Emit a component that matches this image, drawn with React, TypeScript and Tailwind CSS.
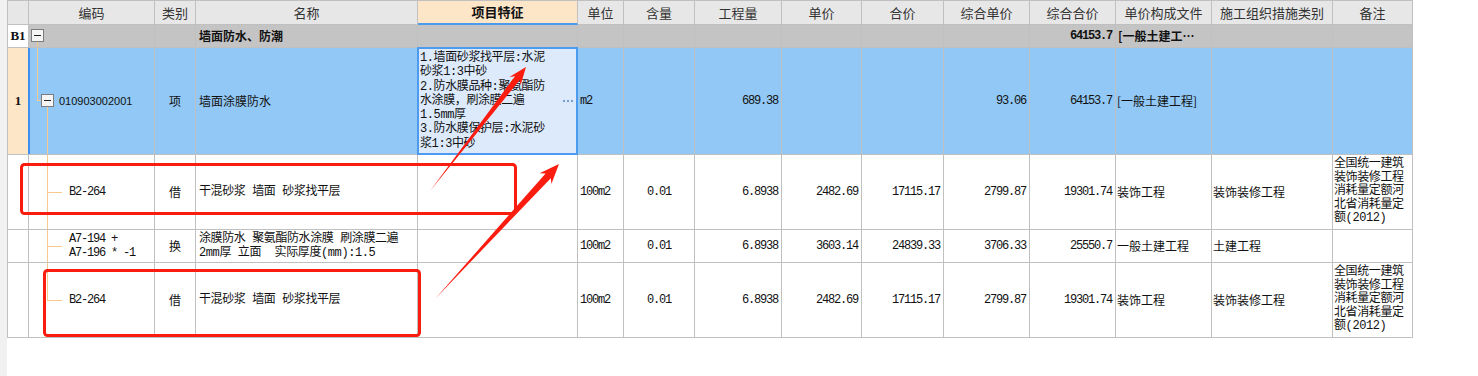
import React from "react";

const GRID =
  "grid grid-cols-[21px_126px_41px_222px_160px_46px_71px_87px_80px_82px_86px_86px_96px_121px_80px]";
const C = "relative border-r border-b border-[#c0c0c0] flex items-center min-w-0";
const CJK = "font-['Noto_Sans_CJK_SC',sans-serif] text-[12px] text-[#111]";
const NUM =
  "font-['Liberation_Mono','Noto_Sans_CJK_SC',monospace] text-[12px] tracking-[-1.2px] text-[#111]";
const MIX =
  "font-['Liberation_Mono','Noto_Sans_CJK_SC',monospace] text-[12px] tracking-[-0.4px] text-[#111]";
const TREE = "absolute bg-[#f6ca8e]";

function Minus({ cls }: { cls: string }) {
  return (
    <div
      className={`absolute w-[13px] h-[13px] border border-[#7d7d7d] bg-[#f5f5f5] flex items-center justify-center ${cls}`}
    >
      <div className="w-[7px] h-px bg-[#222]" />
    </div>
  );
}

function arrow(tx: number, ty: number, px: number, py: number, h: number, hw: number, w: number) {
  const dx = px - tx;
  const dy = py - ty;
  const L = Math.hypot(dx, dy);
  const ux = dx / L;
  const uy = dy / L;
  const nx = -uy;
  const ny = ux;
  const bx = px - ux * h;
  const by = py - uy * h;
  const bbx = px - ux * (h + 4);
  const bby = py - uy * (h + 4);
  const pts = [
    [tx, ty],
    [bx + nx * w, by + ny * w],
    [bbx + nx * hw, bby + ny * hw],
    [px, py],
    [bbx - nx * hw, bby - ny * hw],
    [bx - nx * w, by - ny * w],
  ];
  return pts.map((p) => `${p[0].toFixed(1)},${p[1].toFixed(1)}`).join(" ");
}

const headers = [
  "",
  "编码",
  "类别",
  "名称",
  "项目特征",
  "单位",
  "含量",
  "工程量",
  "单价",
  "合价",
  "综合单价",
  "综合合价",
  "单价构成文件",
  "施工组织措施类别",
  "备注",
];

const remark = ["全国统一建筑", "装饰装修工程", "消耗量定额河", "北省消耗量定", "额(2012)"];

type Sub = {
  code: string[];
  kind: string;
  name: string[];
  price: string;
  total: string;
  cprice: string;
  ctotal: string;
  file: string;
  cat: string;
  remark: boolean;
  h: string;
  last?: boolean;
};

const subs: Sub[] = [
  {
    code: ["B2-264"],
    kind: "借",
    name: ["干混砂浆 墙面 砂浆找平层"],
    price: "2482.69",
    total: "17115.17",
    cprice: "2799.87",
    ctotal: "19301.74",
    file: "装饰工程",
    cat: "装饰装修工程",
    remark: true,
    h: "h-[75px]",
  },
  {
    code: ["A7-194 +", "A7-196 * -1"],
    kind: "换",
    name: ["涂膜防水 聚氨酯防水涂膜 刷涂膜二遍", "2mm厚 立面  实际厚度(mm):1.5"],
    price: "3603.14",
    total: "24839.33",
    cprice: "3706.33",
    ctotal: "25550.7",
    file: "一般土建工程",
    cat: "土建工程",
    remark: false,
    h: "h-[33px]",
  },
  {
    code: ["B2-264"],
    kind: "借",
    name: ["干混砂浆 墙面 砂浆找平层"],
    price: "2482.69",
    total: "17115.17",
    cprice: "2799.87",
    ctotal: "19301.74",
    file: "装饰工程",
    cat: "装饰装修工程",
    remark: true,
    h: "h-[75px]",
    last: true,
  },
];

const features = [
  "1.墙面砂浆找平层:水泥",
  "砂浆1:3中砂",
  "2.防水膜品种:聚氨酯防",
  "水涂膜，刷涂膜二遍",
  "1.5mm厚",
  "3.防水膜保护层:水泥砂",
  "浆1:3中砂",
];

export default function App() {
  return (
    <div className="relative w-[1478px] h-[376px] bg-white flex overflow-hidden">
      <div className="w-[7px] h-full bg-[#f1f1f1] shrink-0" />
      <div className="w-[1406px] self-start border-l border-t border-[#c0c0c0]">
        {/* header */}
        <div className={`${GRID} h-[24px] bg-[#e7e7e7]`}>
          {headers.map((t, i) =>
            i === 4 ? (
              <div
                key={i}
                className={`${C} justify-center bg-[#fde6c8] border-b-2 border-b-[#4a9af0] ${CJK} font-bold text-[13px]`}
              >
                {t}
              </div>
            ) : (
              <div key={i} className={`${C} justify-center ${CJK} text-[13px] text-[#333]`}>
                {t}
              </div>
            )
          )}
        </div>

        {/* B1 row */}
        <div className={`${GRID} h-[23px] bg-[#c4c4c4]`}>
          <div className={`${C} justify-center bg-white font-['Liberation_Serif',serif] font-bold text-[13px] text-[#111]`}>
            B1
          </div>
          <div className={C}>
            <Minus cls="left-[2px] top-[4px]" />
            <div className={`${TREE} left-[8px] top-[17px] bottom-0 w-px`} />
          </div>
          <div className={C} />
          <div className={`${C} pl-[3px] ${CJK} font-bold`}>墙面防水、防潮</div>
          <div className={C} />
          <div className={C} />
          <div className={C} />
          <div className={C} />
          <div className={C} />
          <div className={C} />
          <div className={C} />
          <div className={`${C} justify-end pr-[3px] ${NUM} font-bold`}>64153.7</div>
          <div className={`${C} pl-[2px] ${CJK} font-bold whitespace-nowrap`}>
            [一般土建工…
          </div>
          <div className={C} />
          <div className={C} />
        </div>

        {/* row 1 */}
        <div className={`${GRID} h-[107px] bg-[#92c8f5]`}>
          <div className={`${C} justify-center bg-[#fde6c8] font-['Liberation_Serif',serif] font-bold text-[13px] text-[#111]`}>
            1
          </div>
          <div className={C}>
            <div className="absolute left-[-1px] top-0 bottom-0 w-[2px] bg-[#3f8fee]" />
            <div className={`${TREE} left-[8px] top-0 h-[53px] w-px`} />
            <div className={`${TREE} left-[8px] top-[52px] h-px w-[4px]`} />
            <Minus cls="left-[12px] top-[46px]" />
            <div className={`${TREE} left-[18px] top-[59px] bottom-0 w-px`} />
            <div className="absolute left-[30px] font-['Liberation_Sans',sans-serif] text-[11px] text-[#111]">
              010903002001
            </div>
          </div>
          <div className={`${C} justify-center ${CJK}`}>项</div>
          <div className={`${C} pl-[3px] ${CJK}`}>墙面涂膜防水</div>
          <div className={C}>
            <div className="absolute left-[-1px] right-[-1px] top-[-1px] bottom-[-1px] border-2 border-[#4d9bf0] bg-[#dceafc] z-10 pl-[1px] pt-[2px]">
              {features.map((l, i) => (
                <div key={i} className={`${MIX} leading-[14.3px] whitespace-nowrap`}>
                  {l}
                </div>
              ))}
              <div className="absolute right-[3px] top-[51px] flex gap-[2px]">
                <div className="w-[2px] h-[2px] bg-[#6f9fd2]" />
                <div className="w-[2px] h-[2px] bg-[#6f9fd2]" />
                <div className="w-[2px] h-[2px] bg-[#6f9fd2]" />
              </div>
            </div>
          </div>
          <div className={`${C} pl-[2px] ${NUM}`}>m2</div>
          <div className={C} />
          <div className={`${C} justify-end pr-[3px] ${NUM}`}>689.38</div>
          <div className={C} />
          <div className={C} />
          <div className={`${C} justify-end pr-[3px] ${NUM}`}>93.06</div>
          <div className={`${C} justify-end pr-[3px] ${NUM}`}>64153.7</div>
          <div className={`${C} pl-[1px] ${CJK}`}>[一般土建工程]</div>
          <div className={C} />
          <div className={C} />
        </div>

        {/* sub rows */}
        {subs.map((s, idx) => (
          <div key={idx} className={`${GRID} ${s.h} bg-white`}>
            <div className={C} />
            <div className={C}>
              {s.last ? (
                <div className={`${TREE} left-[18px] top-0 h-[37px] w-px`} />
              ) : (
                <div className={`${TREE} left-[18px] top-0 bottom-0 w-px`} />
              )}
              <div className={`${TREE} left-[18px] top-1/2 h-px w-[15px]`} />
              <div className="absolute left-[40px]">
                {s.code.map((c, i) => (
                  <div key={i} className={`${NUM} leading-[14px] whitespace-pre`}>
                    {c}
                  </div>
                ))}
              </div>
            </div>
            <div className={`${C} justify-center ${CJK}`}>{s.kind}</div>
            <div className={`${C} pl-[3px]`}>
              <div>
                {s.name.map((n, i) => (
                  <div key={i} className={`${MIX} leading-[14px] whitespace-pre`}>
                    {n}
                  </div>
                ))}
              </div>
            </div>
            <div className={C} />
            <div className={`${C} pl-[2px] ${NUM}`}>100m2</div>
            <div className={`${C} justify-center ${NUM}`}>0.01</div>
            <div className={`${C} justify-end pr-[3px] ${NUM}`}>6.8938</div>
            <div className={`${C} justify-end pr-[3px] ${NUM}`}>{s.price}</div>
            <div className={`${C} justify-end pr-[3px] ${NUM}`}>{s.total}</div>
            <div className={`${C} justify-end pr-[3px] ${NUM}`}>{s.cprice}</div>
            <div className={`${C} justify-end pr-[3px] ${NUM}`}>{s.ctotal}</div>
            <div className={`${C} pl-[1px] ${CJK}`}>{s.file}</div>
            <div className={`${C} pl-[1px] ${CJK}`}>{s.cat}</div>
            <div className={`${C} pl-[1px]`}>
              {s.remark && (
                <div>
                  {remark.map((r, i) => (
                    <div key={i} className={`${MIX} leading-[13.6px] whitespace-nowrap`}>
                      {r}
                    </div>
                  ))}
                </div>
              )}
            </div>
          </div>
        ))}
      </div>

      {/* annotations */}
      <svg
        className="absolute left-0 top-0 pointer-events-none z-20"
        width={1478}
        height={376}
        viewBox="0 0 1478 376"
      >
        <rect x={21.5} y={164.5} width={494} height={49} rx={3} fill="none" stroke="#fb1c10" strokeWidth={3} />
        <rect x={44.5} y={270.5} width={375} height={65} rx={3} fill="none" stroke="#fb1c10" strokeWidth={3} />
        <polygon points={arrow(430, 191, 526, 67, 14, 7, 3)} fill="#fb1c10" />
        <polygon points={arrow(435, 299, 559, 164, 16, 8, 3.5)} fill="#fb1c10" />
      </svg>
    </div>
  );
}
